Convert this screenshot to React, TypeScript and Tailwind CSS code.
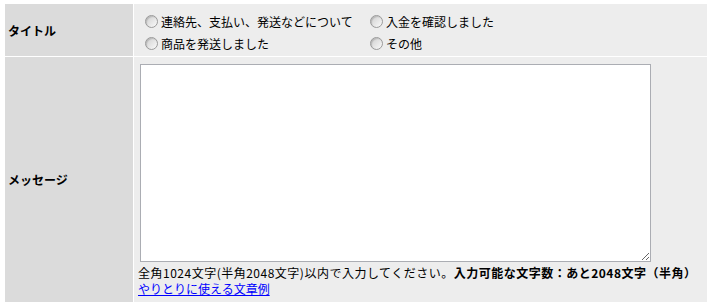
import React from "react";

const titles = [
  "連絡先、支払い、発送などについて",
  "入金を確認しました",
  "商品を発送しました",
  "その他",
];

function Radio({ label }: { label: string }) {
  return (
    <label className="flex h-[22px] items-center gap-[3px]">
      <span className="ml-[11px] inline-block h-[13px] w-[13px] rounded-full border border-[#9a9a9a] bg-gradient-to-br from-[#cfcfcf] to-[#fafafa] shadow-[inset_1px_1px_1px_rgba(0,0,0,0.15)]" />
      <span>{label}</span>
    </label>
  );
}

export default function App() {
  return (
    <div className="min-h-[302px] bg-white pl-[5px] pt-[4px] font-['Noto_Sans_CJK_JP',sans-serif] text-[12px] leading-[15px] text-black">
      <div className="flex flex-col gap-px">
        <div className="flex h-[52px] gap-px">
          <div className="flex w-[128px] shrink-0 items-center bg-[#dbdbdb] pl-[3px] font-bold">
            タイトル
          </div>
          <div className="flex-1 bg-[#ededed] pt-[6px]">
            <div className="grid grid-cols-[225px_225px]">
              {titles.map((t) => (
                <Radio key={t} label={t} />
              ))}
            </div>
          </div>
        </div>
        <div className="flex h-[245px] gap-px">
          <div className="flex w-[128px] shrink-0 items-center bg-[#dbdbdb] pl-[3px] font-bold">
            メッセージ
          </div>
          <div className="flex-1 bg-[#ededed] pl-[4px] pt-[7px]">
            <textarea className="ml-[2px] block h-[198px] w-[511px] resize border border-[#abadb3] bg-white outline-none" />
            <p className="mt-[3px] whitespace-nowrap leading-[16px] tracking-[0.5px]">
              全角1024文字(半角2048文字)以内で入力してください。
              <span className="font-bold">入力可能な文字数：あと2048文字（半角）</span>
            </p>
            <p className="leading-[15px]">
              <a href="#" className="text-[#0000ff] underline">
                やりとりに使える文章例
              </a>
            </p>
          </div>
        </div>
      </div>
    </div>
  );
}
